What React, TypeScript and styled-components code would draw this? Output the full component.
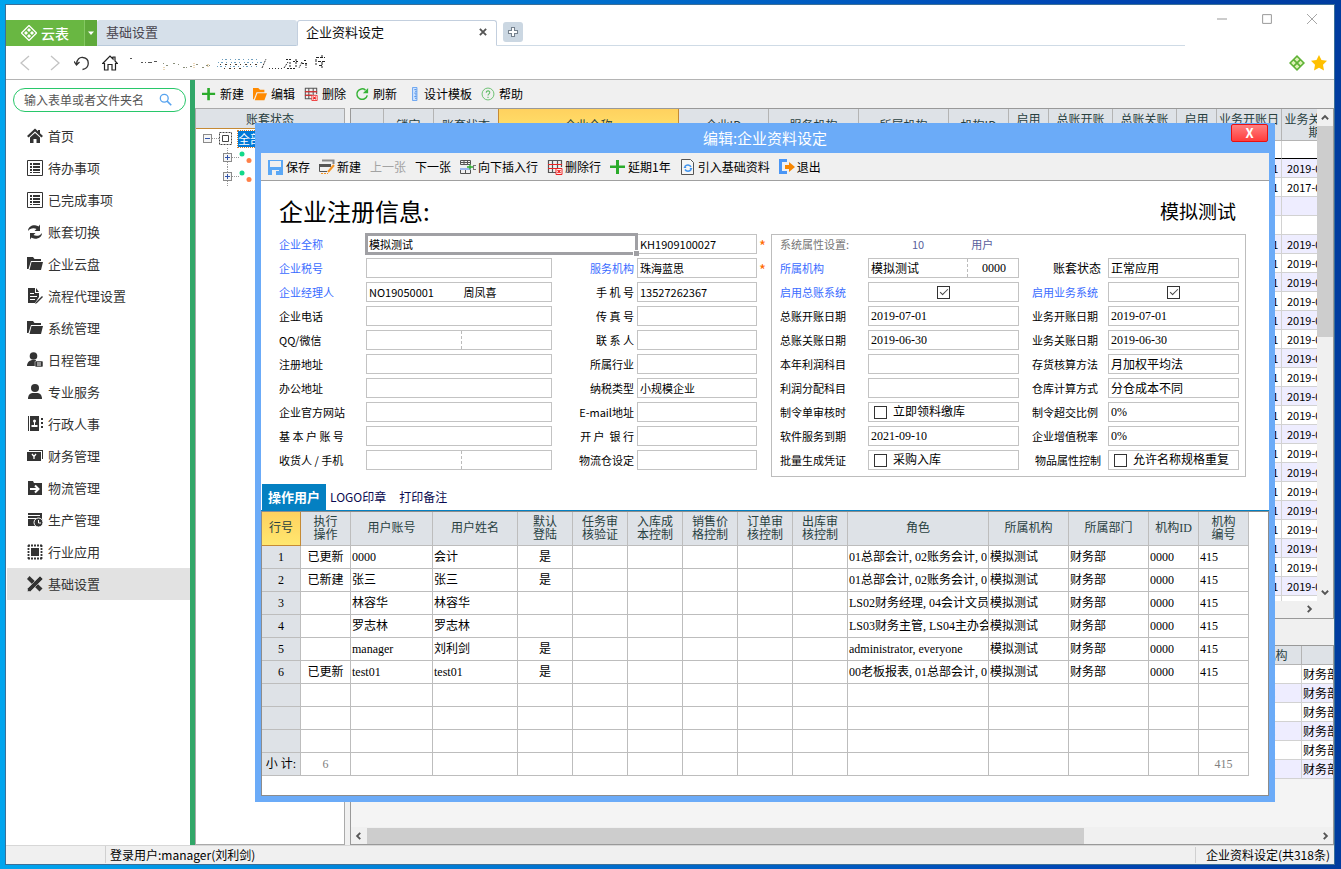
import React from 'react';
import styled, { createGlobalStyle, css } from 'styled-components';

const sans = `"Noto Sans CJK SC", "Liberation Sans", sans-serif`;
const song = `"Liberation Serif", "Noto Sans CJK SC", serif`;

const Global = createGlobalStyle`
  *, *::before, *::after { box-sizing: border-box; }
  body { margin: 0; font-family: ${sans}; font-size: 12px; line-height: 16px; color: #000; }
  button, input { font: inherit; color: inherit; margin: 0; padding: 0; border: 0; background: none; border-radius: 0; }
  svg { display: block; flex: none; }
  table { border-collapse: separate; border-spacing: 0; table-layout: fixed; }
  td, th { padding: 0; font-weight: normal; }
`;

const Desktop = styled.div`
  min-height: 100vh;
  padding: 4px 6px 4px 5px;
  display: flex;
  background: linear-gradient(90deg, #00a5ee 0%, #0073cf 40%, #0046b4 80%, #003c9f 100%);
`;

const Window = styled.div`
  flex: 1;
  min-width: 0;
  display: flex;
  flex-direction: column;
  background: #fff;
  border: 1px solid #3b6f98;
`;

/* ---------- title bar ---------- */
const TitleBar = styled.header`
  display: flex;
  align-items: flex-end;
  height: 41px;
`;
const TabStrip = styled.div`
  flex: 1;
  min-width: 0;
  display: flex;
  align-items: stretch;
  height: 26px;
`;
const Brand = styled.button`
  width: 78px;
  background: #69b742;
  color: #fff;
  font-size: 14px;
  font-weight: 500;
  display: flex;
  align-items: center;
  justify-content: center;
  gap: 4px;
`;
const BrandMenu = styled.button`
  width: 13px;
  background: #5fa93a;
  border-left: 1px solid #84c862;
  display: flex;
  align-items: center;
  justify-content: center;
`;
const Tab = styled.button<{ $active?: boolean }>`
  width: 200px;
  padding: 0 8px 2px 8px;
  display: flex;
  align-items: center;
  justify-content: space-between;
  font-size: 13px;
  color: ${p => (p.$active ? '#111' : '#4a4650')};
  background: ${p => (p.$active ? '#fff' : '#d6e0ea')};
  border: 1px solid ${p => (p.$active ? '#c3cfde' : '#d6e0ea')};
  border-bottom-color: ${p => (p.$active ? '#fff' : '#b9cadb')};
  border-radius: 3px 3px 0 0;
`;
const StripRest = styled.div`
  flex: 1;
  padding: 2px 0 0 6px;
  border-bottom: 1px solid #cfdbe6;
`;
const AddTab = styled.button`
  width: 20px;
  height: 20px;
  border-radius: 3px;
  background: #cbd7e2;
  display: grid;
  place-items: center;
`;
const WindowButtons = styled.div`
  align-self: flex-start;
  display: flex;
  margin-left: 14px;
`;
const WindowButton = styled.button`
  width: 45px;
  height: 28px;
  display: grid;
  place-items: center;
`;

const NavBar = styled.nav`
  height: 34px;
  padding: 0 7px 0 12px;
  display: flex;
  align-items: center;
  border-bottom: 1px solid #b4b4b4;
`;
const NavButton = styled.button`
  width: 28px;
  display: flex;
  align-items: center;
  justify-content: flex-start;
`;
const Address = styled.div`
  flex: 1;
`;
const NavRight = styled.div`
  display: flex;
  gap: 6px;
`;

/* ---------- body ---------- */
const Body = styled.div`
  flex: 1;
  display: flex;
  min-height: 740px;
`;
const Sidebar = styled.aside`
  width: 189px;
  border-right: 5px solid #31a768;
  padding-top: 8px;
`;
const Search = styled.label`
  display: flex;
  align-items: center;
  height: 24px;
  margin: 0 4px 8px 7px;
  padding: 0 12px 0 10px;
  border: 1px solid #28c76a;
  border-radius: 12px;
  input { flex: 1; min-width: 0; outline: 0; }
  input::placeholder { color: #555; opacity: 1; }
`;
const Menu = styled.ul`
  margin: 0;
  padding: 0;
  list-style: none;
`;
const MenuLink = styled.a<{ $active?: boolean }>`
  display: flex;
  align-items: center;
  gap: 5px;
  height: 32px;
  margin-left: 1px;
  padding-left: 20px;
  font-size: 13px;
  color: #333;
  text-decoration: none;
  background: ${p => (p.$active ? '#e2e2e2' : 'transparent')};
`;

const Workspace = styled.main`
  position: relative;
  flex: 1;
  min-width: 0;
  display: flex;
  flex-direction: column;
  background: #f0f0f0;
`;
const Toolbar = styled.div<{ $dialog?: boolean }>`
  flex: none;
  height: 28px;
  padding: 0 7px;
  display: flex;
  align-items: center;
  gap: 9px;
  background: #f0f0f0;
  border-bottom: ${p => (p.$dialog ? '1px solid #a0a0a0' : '0')};
`;
const ToolButton = styled.button<{ $gap: number }>`
  display: flex;
  align-items: center;
  gap: ${p => p.$gap}px;
  white-space: nowrap;
  &:disabled { color: #a3a3a3; }
`;

const Panes = styled.div`
  flex: 1;
  min-height: 0;
  display: grid;
  grid-template-columns: 150px minmax(0, 1fr);
  grid-template-rows: minmax(0, 1fr);
  gap: 5px;
`;
const TreePane = styled.section`
  background: #fff;
  border: 1px solid #aaa;
`;
const TreeHead = styled.div`
  height: 20px;
  line-height: 20px;
  text-align: center;
  color: #28403f;
  background: #dee2e7;
  border-bottom: 1px solid #c58a35;
`;
const TreeRow = styled.div<{ $level: number }>`
  display: flex;
  align-items: center;
  height: 19px;
  padding-left: ${p => 7 + p.$level * 20}px;
`;
const TreeLabel = styled.span`
  margin-left: 6px;
  color: #fff;
  background: #0078d7;
  outline: 1px dotted #d08030;
`;

const Grids = styled.div`
  display: grid;
  min-width: 0;
  grid-template-columns: minmax(0, 1fr);
  grid-template-rows: minmax(0, 51fr) 26px minmax(0, 20fr);
`;
const GridPane = styled.section`
  display: flex;
  flex-direction: column;
  min-height: 0;
  border: 1px solid #999;
  background: #f4f4f4;
`;
const GridRow = styled.div`
  flex: 1;
  min-height: 0;
  display: flex;
  contain: size;
`;
const GridView = styled.div<{ $white?: boolean }>`
  flex: 1;
  min-width: 0;
  overflow: hidden;
  background: ${p => (p.$white ? '#fff' : '#f4f4f4')};
`;
const BackTable = styled.table`
  width: 997px;
  font-size: 11px;
  th {
    height: 32px;
    line-height: 13px;
    font-size: 12px;
    color: #28403f;
    background: #dee2e7;
    border-right: 1px solid #b4b4b4;
    border-bottom: 1px solid #b4b4b4;
  }
  &.short { width: 1071px; font-size: 12px; }
  &.short th { height: 19px; }
  th.selected {
    background: linear-gradient(#ffd15f, #ffe76f);
    border-right-color: #c58a35;
    box-shadow: -1px 0 #c58a35;
  }
  td {
    height: 19px;
    line-height: 16px;
    padding-left: 5px;
    white-space: nowrap;
    border-right: 1px solid #d2d2d2;
    border-bottom: 1px solid #d2d2d2;
  }
  &.short td { padding-left: 1px; background: #fff; }
  tr.odd td, &.short tr.odd td { background: #eeedff; }
  tr.filter td { height: 18px; border-bottom: 1px solid #000; }
`;
const ScrollV = styled.div`
  width: 16px;
  display: flex;
  flex-direction: column;
  justify-content: space-between;
  align-items: center;
  background: #f0f0f0;
`;
const ScrollH = styled.div`
  height: 17px;
  display: flex;
  align-items: center;
  justify-content: space-between;
  background: #f0f0f0;
`;
const Thumb = styled.div<{ $vertical?: boolean }>`
  background: #cdcdcd;
  ${p => (p.$vertical
    ? css`width: 16px; height: 43%; margin-bottom: auto;`
    : css`height: 16px; width: 73%; margin-right: auto;`)}
`;
const Arrow = styled.button`
  width: 16px;
  height: 17px;
  flex: none;
  display: grid;
  place-items: center;
`;

/* ---------- dialog ---------- */
const Dialog = styled.section`
  position: absolute;
  top: 43px;
  left: 60px;
  right: 59px;
  padding: 0 6px 6px;
  background: #6babf8;
`;
const DialogTitle = styled.header`
  position: relative;
  height: 30px;
  line-height: 30px;
  font-size: 15px;
  text-align: center;
  color: #fff;
`;
const CloseButton = styled.button`
  position: absolute;
  right: 1px;
  top: 1px;
  width: 37px;
  height: 18px;
  line-height: 16px;
  font-size: 13px;
  font-weight: bold;
  color: #fff;
  border: 1px solid #e81010;
  border-radius: 2px;
  background: linear-gradient(#ff8080, #ff3c3c);
`;
const DialogBody = styled.div`
  background: #fff;
`;
const Headline = styled.div`
  display: flex;
  align-items: center;
  justify-content: space-between;
  height: 51px;
  padding: 8px 33px 0 18px;
  h1, h2 { margin: 0; font-weight: normal; line-height: 32px; }
  h1 { font-size: 24px; }
  h2 { font-size: 19px; }
`;
const FormArea = styled.form`
  display: grid;
  grid-template-columns: minmax(0, 492fr) minmax(0, 475fr);
  padding: 0 23px 0 18px;
  margin-bottom: 7px;
`;
const FormLeft = styled.div`
  display: grid;
  grid-template-columns: 87px minmax(0, 186fr) 85px minmax(0, 120fr) 14px;
  grid-auto-rows: 24px;
  align-items: center;
  font-size: 11px;
`;
const FormRight = styled.fieldset`
  margin: 2px 0 0;
  padding: 0 6px 4px 8px;
  min-width: 0;
  border: 1px solid #bdbdbd;
  display: grid;
  grid-template-columns: 88px minmax(0, 151fr) 89px minmax(0, 131fr);
  grid-template-rows: 21px repeat(9, 24px);
  align-items: center;
  font-size: 11px;
`;
const Label = styled.label<{ $link?: boolean; $end?: number; $song?: boolean }>`
  white-space: pre;
  color: ${p => (p.$link ? '#3a6cff' : '#000')};
  ${p => p.$end !== undefined && css`justify-self: end; padding-right: ${p.$end}px;`}
  ${p => p.$song && css`font-size: 12px;`}
`;
const Box = styled.div<{ $song?: boolean; $span?: boolean; $center?: boolean }>`
  display: flex;
  align-items: center;
  justify-content: ${p => (p.$center ? 'center' : 'flex-start')};
  height: 20px;
  min-width: 0;
  border: 1px solid #c3c3c3;
  background: #fff;
  ${p => p.$song && css`font-family: ${song}; font-size: 12px;`}
  ${p => p.$span && css`
    position: relative;
    grid-column: span 2;
    outline: 2px solid #a0a0a4;
    outline-offset: -1px;
    border-color: #a0a0a4;
    box-shadow: inset 0 0 0 1px #a0a0a4;
    z-index: 1;
    &::after {
      content: '';
      position: absolute;
      right: -3px;
      bottom: -3px;
      width: 6px;
      height: 6px;
      background: #a0a0a4;
      border: 1px solid #fff;
      border-width: 1px 0 0 1px;
    }
  `}
`;
const Input = styled.input<{ $dash?: boolean; $part?: number }>`
  flex: ${p => p.$part ?? 1} 1 0;
  min-width: 0;
  height: 18px;
  padding-left: 2px;
  outline: 0;
  border-left: ${p => (p.$dash ? '1px dashed #bbb' : '0')};
`;
const CenterInput = styled(Input)`
  text-align: center;
`;
const Check = styled.input`
  appearance: none;
  position: relative;
  flex: none;
  width: 13px;
  height: 13px;
  border: 1px solid #333;
  background: #fff;
  &:checked::after {
    content: '';
    position: absolute;
    left: 2px;
    top: 2px;
    width: 8px;
    height: 4px;
    border: solid #444;
    border-width: 0 0 1px 1px;
    transform: rotate(-45deg);
  }
`;
const CheckLabel = styled.label`
  display: flex;
  align-items: center;
  gap: 6px;
  padding-left: 5px;
  white-space: nowrap;
`;
const Star = styled.span`
  color: #ff6a00;
  font-size: 15px;
  line-height: 16px;
  padding: 4px 0 0 2px;
`;
const Caption = styled.span`
  color: #777;
  padding-bottom: 3px;
`;
const Note = styled.div`
  color: #5a5f9c;
  display: flex;
  gap: 47px;
  padding: 0 0 3px 44px;
`;

const Tabs = styled.div`
  display: flex;
  align-items: stretch;
  height: 26px;
  padding-left: 1px;
`;
const PageTab = styled.button<{ $active?: boolean }>`
  padding: 0 ${p => (p.$active ? 6 : 0)}px;
  margin-right: ${p => (p.$active ? 4 : 13)}px;
  font-size: ${p => (p.$active ? 13 : 12)}px;
  font-weight: ${p => (p.$active ? 'bold' : 'normal')};
  color: ${p => (p.$active ? '#fff' : '#0a0a50')};
  background: ${p => (p.$active ? '#0480c2' : 'none')};
`;
const TableFrame = styled.div`
  border: 1px solid #8c8c8c;
  box-shadow: 0 -1px #0480c2;
  margin-top: 1px;
  padding-bottom: 19px;
  overflow-x: auto;
  overflow-y: hidden;
`;
const UserTable = styled.table`
  width: 987px;
  font-family: ${song};
  th, td {
    overflow: hidden;
    white-space: nowrap;
    border-right: 1px solid #bdbdbd;
    border-bottom: 1px solid #bdbdbd;
  }
  thead th {
    height: 34px;
    line-height: 13px;
    white-space: pre;
    color: #28403f;
    background: #dee2e7;
  }
  thead th:first-child {
    background: linear-gradient(#ffd15f, #ffe76f);
    border-color: #c58a35;
  }
  tbody th, tfoot th { background: #dee2e7; }
  td { height: 23px; padding-left: 1px; }
  td.mid { text-align: center; padding: 0; }
  tfoot td { color: #808080; }
`;

const StatusBar = styled.footer`
  height: 19px;
  display: flex;
  align-items: center;
  background: #f0f0f0;
  border-top: 1px solid #d7d7d7;
  div { flex: 1; margin-left: 99px; }
  span {
    border-left: 1px solid #d0d0d0;
    padding: 0 4px;
  }
  > span { padding-left: 10px; }
`;

/* ---------- icons ---------- */
type IconProps = { name: string; size?: number };

const shapes: Record<string, React.ReactNode> = {
  home: <><path d="M8 .5 0 8l1.6 1.5L8 3.600l6.400 5.900L16 8l-3-2.800V2h-2v1.300z" /><path d="M3 9.500 8 5l5 4.500V15H9.500v-4h-3v4H3z" /></>,
  list: <><path d="M.5.500h15v15H.500z" fill="none" stroke="#333" /><path d="M3 3h2v2H3zm3 0h7v2H6zM3 6h2v2H3zm3 0h7v2H6zM3 9h2v2H3zm3 0h7v2H6zm-3 3h2v1H3zm3 0h7v1H6z" /></>,
  sync: <><path d="M1 7C1 3 5 1 8 1.300c1.500.1 2.500.500 3.500 1.200L13 .5V7H7.500L9.500 5C7 3.500 3 4 1 7z" /><path d="M15 9c0 4-4 6-7 5.700-1.500-.1-2.500-.5-3.500-1.200L3 15.500V9h5.500L6.500 11C9 12.500 13 12 15 9z" /></>,
  folder: <><path d="M0 1h6l1.500 2H14v2H4L1.500 13H0z" /><path d="M4.500 6H16l-2 8H2.500z" /></>,
  doc: <><path d="M1 0h7v5h4v4l-4 6H1zM9 0l3 4H9z" /><path d="M3 5.500h4M3 8.500h7M3 11.500h5" stroke="#fff" /><path d="m9 14 6-6 1 1-6 6-2 1z" /></>,
  agenda: <><circle cx="6.500" cy="4" r="3.800" /><path d="M0 14c0-4 3-6 6-6h3v6z" /><rect x="8" y="9" width="8" height="6" rx="1" stroke="#fff" strokeWidth=".5" /><path d="M10 11h4M10 13h4" stroke="#fff" /></>,
  user: <><circle cx="8" cy="4" r="4" /><path d="M1 15c0-4 2-6 5-6h4c3 0 5 2 5 6z" /></>,
  book: <><path d="M1 0h1v15H1zM3 0h9v15H3zM14 2h2v2h-2zm0 4h2v2h-2zm0 4h2v2h-2z" /><circle cx="7.500" cy="5" r="1.500" fill="#fff" /><path d="M7 6h1v3h2.500v2h-6V9H7z" fill="#fff" /></>,
  money: <><path d="M2 2h14v9h-1V3H2z" /><path d="M0 4h14v9H0z" /><path d="m5 6 2 2.500L9 6M7 8v3" stroke="#fff" strokeWidth="1.300" fill="none" /></>,
  ship: <><path d="M1 1h5l1 2h8v12H1z" /><path d="M3 9h8M8 5.500 11.500 9 8 12.500" stroke="#fff" strokeWidth="2" fill="none" /></>,
  produce: <><path d="M1 1h14v6H8v7H1z" /><path d="M1 3.500h12M1 6.500h8" stroke="#fff" /><circle cx="11.500" cy="10.500" r="4.500" stroke="#fff" /><path d="M11.500 8v3H14" stroke="#fff" fill="none" /></>,
  chip: <><path d="M4 4h8v8H4z" /><path d="M1 1.500h14M1 14.500h14M1.500 1v14M14.500 1v14" stroke="#333" strokeWidth="1.800" strokeDasharray="2 1" fill="none" /></>,
  tools: <><path d="m2.500 0 13 12.500-3 3L0 3z" /><path d="m13 0 3 3L3.500 15.500H.500V12.500z" stroke="#e2e2e2" strokeWidth=".6" /></>,
  plus: <path d="M6 1h3v5.500h6v2.500H9v6H6V9H0V6.500h6z" fill="#2bab2b" />,
  openFolder: <path d="M0 1h6l2 2h5v3H4l-3 8H0zM5 7h11l-3 8H2z" fill="#ff8a00" />,
  gridDelete: <><path d="M1 1.500h14M1 5.500h14M1 9.500h8M1 13.500h8M1.500 1v13M5.500 1v13M10.500 1v8M14.500 1v7" stroke="#555" strokeWidth="1.200" fill="none" /><path d="M1 5.500h14M1 9.500h8" stroke="#e22" strokeWidth="1.200" /><path d="M9 9.500h6v6H9z" fill="#fff" stroke="#e22" /><path d="m10.500 11 3 3m0-3-3 3" stroke="#e22" strokeWidth="1.300" /></>,
  refresh: <><path d="M12 3.500A6 6 0 1 0 14 9.500" stroke="#36b336" strokeWidth="1.700" fill="none" /><path d="M15 1v6H9z" fill="#36b336" /></>,
  ruler: <><path d="M7.500.500h5v15h-5z" fill="#cfe4ff" stroke="#5a9cf0" /><path d="M9.500 3H12M10.500 5H12M9.500 7H12M10.500 9H12M9.500 11H12M10.500 13H12" stroke="#3a80e0" /></>,
  help: <><circle cx="8" cy="8" r="6.800" stroke="#5dbb63" fill="none" /><path d="M6 6.500C6 3.500 10.500 4 10 6.500 9.800 8 8 7.800 8 9.800M8 11v1.500" stroke="#5dbb63" strokeWidth="1.200" fill="none" /></>,
  save: <><path d="M0 1h15v15H0z" fill="#5aa7f5" /><path d="M2 2h11v6H2zM4 11h7v5H4z" fill="#f0f0f0" /><path d="M8 12h3v4H8z" fill="#5aa7f5" /></>,
  edit: <><path d="M3 1.500h11.500V5" stroke="#888" strokeWidth="2" fill="none" /><path d="M0 5h12v3H0z" fill="#555" /><path d="M.500 6v6.500H8" stroke="#555" fill="none" /><path d="m15 6-6 7" stroke="#f79320" strokeWidth="2" /><path d="M2 14.500h7" stroke="#f79320" strokeDasharray="2 1" /></>,
  insert: <><path d="M.500 1.500h10v4H.500zM.500 3.500h10M4 1.500v4M7.500 1.500v4M.500 10.500h10v4H.500z" stroke="#555" fill="none" /><path d="M0 9h11v2H0z" fill="#9bb8ee" /><path d="M5.500 11v4" stroke="#555" /><path d="M13.500 6v5M13 6.500h3M13 10.500h3" stroke="#777" /><path d="M7 8h6M10 5.500v5" stroke="#2bab2b" strokeWidth="1.300" /></>,
  importDoc: <><path d="M1.500.500h9l3 3v12h-12z" fill="#f6f6f6" stroke="#555" /><path d="M5 7.500a3.500 3.500 0 0 1 6 .5M11 10.500a3.500 3.500 0 0 1-6 0" stroke="#3f93ee" strokeWidth="1.500" fill="none" /><path d="M3.500 9 5 6.500 6.500 9zM9.500 9l1.500 2.500L12.500 9z" fill="#3f93ee" /></>,
  exit: <><path d="M8 0H0v15h8v-3H3V3h5z" fill="#4a96f5" /><path d="M6 6h4V3l6 5-6 5v-3H6z" fill="#f78600" /></>,
  lens: <><circle cx="6" cy="6" r="4.500" stroke="#57a3ef" strokeWidth="1.500" fill="none" /><path d="m9 9 5 5" stroke="#57a3ef" strokeWidth="1.800" /></>,
  back: <path d="M11 1 3 8l8 7" stroke="#c3c3c3" strokeWidth="1.300" fill="none" />,
  forward: <path d="m5 1 8 7-8 7" stroke="#c3c3c3" strokeWidth="1.300" fill="none" />,
  undo: <path d="M0 6.500 2.500 10l3-3M2.500 9.500C2.500 4 6 2 9 2.500c3.500.5 5.500 3 5.200 6.500-.2 3-2.500 5-5.700 5.500" stroke="#333" strokeWidth="1.300" fill="none" />,
  house: <path d="M.700 8.500 8 1l3 3V2h2v4l2.300 2.500H13.500V15h-3.500V9.500H6V15H2.500V8.500z" stroke="#222" strokeWidth="1.200" fill="none" />,
  logo: <><path d="M8 .500 15.500 8 8 15.500.500 8z" fill="none" stroke="#fff" strokeWidth="1.300" /><path d="m8 3 2 2-2 2-2-2zM11 6l2 2-2 2-2-2zM8 9l2 2-2 2-2-2zM5 6l2 2-2 2-2-2z" fill="#fff" /></>,
  greenLogo: <><path d="M8 0 16 8 8 16 0 8z" fill="#5fb336" /><path d="m8 2.200 2.300 2.300L8 6.800 5.700 4.500zM11.500 5.700 13.800 8l-2.300 2.300L9.200 8zM8 9.200l2.300 2.300L8 13.800l-2.300-2.300zM4.500 5.700 6.800 8l-2.300 2.300L2.200 8z" fill="#dff1b8" /></>,
  star: <path d="m8 0 2.500 5 5.500.8-4 4 1 5.700-5-2.700-5 2.700 1-5.700-4-4L5.500 5z" fill="#ffc000" />,
  caret: <path d="M2 5h12l-6 7z" fill="#fff" />,
  cross: <path d="m3 3 10 10M13 3 3 13" stroke="#555" strokeWidth="3" />,
  plusOutline: <path d="M6 2h4v4h4v4h-4v4H6v-4H2V6h4z" fill="#fff" stroke="#75818d" strokeWidth="1.400" />,
  minimize: <path d="M0 8h16" stroke="#999" strokeWidth="1.600" />,
  maximize: <path d="M1 1h14v14H1z" stroke="#999" strokeWidth="1.600" fill="none" />,
  close: <path d="m0 0 16 16M16 0 0 16" stroke="#999" strokeWidth="1.400" />,
  up: <path d="m3 10 5-5 5 5" stroke="#555" strokeWidth="3" fill="none" />,
  down: <path d="m3 6 5 5 5-5" stroke="#555" strokeWidth="3" fill="none" />,
  left: <path d="M10 3 5 8l5 5" stroke="#555" strokeWidth="3" fill="none" />,
  right: <path d="m6 3 5 5-5 5" stroke="#555" strokeWidth="3" fill="none" />,
};

const Icon = ({ name, size = 16 }: IconProps) => (
  <svg width={size} height={size} viewBox="0 0 16 16" fill="#333" aria-hidden="true">{shapes[name]}</svg>
);

const Expander = ({ open }: { open?: boolean }) => (
  <svg width="16" height="19" aria-hidden="true">
    {!open && <path d="M4.500 0v19" stroke="#999" strokeDasharray="1 1" />}
    <path d="M9 9.500h7" stroke="#999" strokeDasharray="1 1" />
    <rect x=".5" y="5.500" width="8" height="8" fill="#f6f6f6" stroke="#8a8a8a" />
    <path d={open ? 'M2 9.500h5' : 'M2 9.500h5M4.500 7v5'} stroke="#3355aa" />
  </svg>
);

const SpeckledAddress = () => (
  <svg width="200" height="18" aria-hidden="true" fill="none" strokeWidth="1">
    <path d="M0 4.500h2M11 8.500h2M15 8.500h1M18 8.500h4M24 7.500h3" stroke="#555" />
    <path d="M33 9.500h1M36 11.500h3M43 9.500h2M48 10.500h1M53 13.500h4M60 12.500h2M66 10.500h3M72 13.500h2M76 11.500h4" stroke="#8a8f7a" strokeDasharray="2 1" />
    <path d="M34 13v4M64 9v5M78 10v4" stroke="#d8b070" strokeDasharray="1 1" />
    <path d="M88 8.500h44M87 12.500h42M92 5.500h38" stroke="#6f9fbe" strokeDasharray="1 2 2 3 1 4" />
    <path d="M90 10.500h40M94 14.500h20" stroke="#4b3a2a" strokeDasharray="1 4 2 3" />
    <path d="m132 14 4-9" stroke="#333" strokeDasharray="2 1" />
    <path d="M139 14.500h14" stroke="#333" strokeDasharray="1 2" />
    <path d="M154 14l4-6M156 5.500h5M160 8v5M157 14.500h8M163 7.500h6M166 5v9M172 8l-3 6M172 9.500h5M174 6.500h3M176 10v4" stroke="#222" strokeDasharray="2 1" />
    <path d="M186 3.500h9M192 1v2M186 5v6M188 7.500h8M192 8v6M189 11.500h4" stroke="#222" strokeDasharray="3 1" />
  </svg>
);

/* ---------- data ---------- */
const menu: [string, string][] = [
  ['home', '首页'], ['list', '待办事项'], ['list', '已完成事项'], ['sync', '账套切换'], ['folder', '企业云盘'],
  ['doc', '流程代理设置'], ['folder', '系统管理'], ['agenda', '日程管理'], ['user', '专业服务'], ['book', '行政人事'],
  ['money', '财务管理'], ['ship', '物流管理'], ['produce', '生产管理'], ['chip', '行业应用'], ['tools', '基础设置'],
];
const mainTools: [string, string][] = [
  ['plus', '新建'], ['openFolder', '编辑'], ['gridDelete', '删除'], ['refresh', '刷新'], ['ruler', '设计模板'], ['help', '帮助'],
];
const dialogTools: [string, string][] = [
  ['save', '保存'], ['edit', '新建'], ['', '上一张'], ['', '下一张'], ['insert', '向下插入行'], ['gridDelete', '删除行'],
  ['plus', '延期1年'], ['importDoc', '引入基础资料'], ['exit', '退出'],
];
const backColumns: [string, number][] = [
  ['', 33], ['锁定', 50], ['账套状态', 65], ['企业全称', 180], ['企业ID', 90], ['服务机构', 90], ['所属机构', 90], ['机构ID', 60],
  ['启用\n总账', 40], ['总账开账\n日期', 64], ['总账关账\n日期', 64], ['启用\n业务', 40], ['业务开账日\n期', 65], ['业务关账日\n期', 66],
];
const backDates = Array.from({ length: 24 }, (_, i) => {
  if (i === 2 || i === 3 || i === 23) return ['', ''];
  return [i === 1 ? '2017-07-01' : '2019-07-01', i === 1 ? '2017-06-30' : '2019-06-30'];
});

type Field = { label: string; link?: boolean; values?: string[]; star?: boolean; plain?: boolean };
const leftRows: [Field, Field][] = [
  [{ label: '企业税号', link: true }, { label: '服务机构', link: true, values: ['珠海蓝思'], star: true }],
  [{ label: '企业经理人', link: true, values: ['NO19050001', '周凤喜'], plain: true }, { label: '手 机 号', values: ['13527262367'] }],
  [{ label: '企业电话' }, { label: '传 真 号' }],
  [{ label: 'QQ/微信', values: ['', ''] }, { label: '联 系 人' }],
  [{ label: '注册地址' }, { label: '所属行业' }],
  [{ label: '办公地址' }, { label: '纳税类型', values: ['小规模企业'] }],
  [{ label: '企业官方网站' }, { label: 'E-mail地址' }],
  [{ label: '基 本 户 账 号' }, { label: '开 户  银 行' }],
  [{ label: '收货人 / 手机', values: ['', ''] }, { label: '物流仓设定' }],
];

type Setting = { label: string; link?: boolean; text?: string; check?: boolean; caption?: string; wide?: boolean };
const rightRows: [Setting, Setting][] = [
  [{ label: '启用总账系统', link: true, check: true }, { label: '启用业务系统', link: true, check: true }],
  [{ label: '总账开账日期', text: '2019-07-01' }, { label: '业务开账日期', text: '2019-07-01' }],
  [{ label: '总账关账日期', text: '2019-06-30' }, { label: '业务关账日期', text: '2019-06-30' }],
  [{ label: '本年利润科目' }, { label: '存货核算方法', text: '月加权平均法' }],
  [{ label: '利润分配科目' }, { label: '仓库计算方式', text: '分仓成本不同' }],
  [{ label: '制令单审核时', caption: '立即领料缴库' }, { label: '制令超交比例', text: '0%' }],
  [{ label: '软件服务到期', text: '2021-09-10' }, { label: '企业增值税率', text: '0%' }],
  [{ label: '批量生成凭证', caption: '采购入库' }, { label: '物品属性控制', caption: '允许名称规格重复', wide: true }],
];

const userColumns: [string, number][] = [
  ['行号', 39], ['执行\n操作', 50], ['用户账号', 82], ['用户姓名', 85], ['默认\n登陆', 55], ['任务审\n核验证', 55], ['入库成\n本控制', 55],
  ['销售价\n格控制', 55], ['订单审\n核控制', 55], ['出库审\n核控制', 55], ['角色', 141], ['所属机构', 80], ['所属部门', 80], ['机构ID', 50], ['机构\n编号', 50],
];
const users = [
  ['已更新', '0000', '会计', '是', '01总部会计, 02账务会计, 0'],
  ['已新建', '张三', '张三', '是', '01总部会计, 02账务会计, 0'],
  ['', '林容华', '林容华', '', 'LS02财务经理, 04会计文员'],
  ['', '罗志林', '罗志林', '', 'LS03财务主管, LS04主办会'],
  ['', 'manager', '刘利剑', '是', 'administrator, everyone'],
  ['已更新', 'test01', 'test01', '是', '00老板报表, 01总部会计, 0'],
];
const userRows = Array.from({ length: 9 }, (_, i) => {
  const u = users[i];
  return u
    ? [u[0], u[1], u[2], u[3], '', '', '', '', '', u[4], '模拟测试', '财务部', '0000', '415']
    : Array<string>(14).fill('');
});

const Columns = ({ columns }: { columns: [string, number][] }) => (
  <colgroup>{columns.map(([name, w], i) => <col key={name + i} style={{ width: w }} />)}</colgroup>
);
const Lines = ({ text }: { text: string }) => (
  <>{text.split('\n').map((line, i) => <React.Fragment key={i}>{i > 0 && <br />}{line}</React.Fragment>)}</>
);

const FieldPair = ({ field, id, end }: { field: Field; id: string; end?: number }) => (
  <>
    <Label htmlFor={id} $link={field.link} $end={end}>{field.label}</Label>
    <Box>
      {(field.values ?? ['']).map((value, i) => (
        <Input key={i} id={i ? undefined : id} aria-label={i ? field.label : undefined} $dash={i > 0 && !field.plain}
          $part={i ? 90 : 95} defaultValue={value} />
      ))}
    </Box>
  </>
);

const SettingPair = ({ item, id, end }: { item: Setting; id: string; end?: number }) => (
  <>
    <Label htmlFor={id} $link={item.link} $end={item.wide ? 7 : end}>{item.label}</Label>
    <Box $song $center={item.check}>
      {item.check && <Check type="checkbox" id={id} defaultChecked />}
      {item.caption && <CheckLabel><Check type="checkbox" id={id} />{item.caption}</CheckLabel>}
      {!item.check && !item.caption && <Input id={id} defaultValue={item.text ?? ''} />}
    </Box>
  </>
);

const EditDialog = () => (
  <Dialog role="dialog" aria-label="编辑:企业资料设定">
    <DialogTitle>编辑:企业资料设定<CloseButton type="button">X</CloseButton></DialogTitle>
    <DialogBody>
      <Toolbar $dialog>
        {dialogTools.map(([icon, text]) => (
          <ToolButton key={text} type="button" $gap={2} disabled={text === '上一张'}>
            {icon && <Icon name={icon} />}{text}
          </ToolButton>
        ))}
      </Toolbar>
      <Headline><h1>企业注册信息:</h1><h2>模拟测试</h2></Headline>
      <FormArea>
        <FormLeft>
          <Label htmlFor="company" $link>企业全称</Label>
          <Box $span><Input id="company" defaultValue="模拟测试" /></Box>
          <Box><Input aria-label="企业编号" defaultValue="KH1909100027" /></Box>
          <Star>*</Star>
          {leftRows.map(([a, b], i) => (
            <React.Fragment key={a.label}>
              <FieldPair field={a} id={`a${i}`} />
              <FieldPair field={b} id={`b${i}`} end={3} />
              <Star>{b.star ? '*' : ''}</Star>
            </React.Fragment>
          ))}
        </FormLeft>
        <FormRight>
          <Caption>系统属性设置:</Caption>
          <Note><span>10</span><span>用户</span></Note>
          <span /><span />
          <Label htmlFor="org" $link>所属机构</Label>
          <Box $song>
            <Input id="org" $part={2} defaultValue="模拟测试" />
            <CenterInput aria-label="机构编号" $dash defaultValue="0000" />
          </Box>
          <Label htmlFor="state" $end={7} $song>账套状态</Label>
          <Box $song><Input id="state" defaultValue="正常应用" /></Box>
          {rightRows.map(([a, b], i) => (
            <React.Fragment key={a.label}>
              <SettingPair item={a} id={`c${i}`} />
              <SettingPair item={b} id={`d${i}`} end={10} />
            </React.Fragment>
          ))}
        </FormRight>
      </FormArea>
      <Tabs>
        <PageTab type="button" $active>操作用户</PageTab>
        <PageTab type="button">LOGO印章</PageTab>
        <PageTab type="button">打印备注</PageTab>
      </Tabs>
      <TableFrame>
        <UserTable>
          <Columns columns={userColumns} />
          <thead>
            <tr>{userColumns.map(([name]) => <th key={name} scope="col"><Lines text={name} /></th>)}</tr>
          </thead>
          <tbody>
            {userRows.map((row, r) => (
              <tr key={r}>
                <th scope="row">{r < users.length ? r + 1 : ''}</th>
                {row.map((cell, c) => <td key={c} className={c === 0 || c === 3 ? 'mid' : undefined}>{cell}</td>)}
              </tr>
            ))}
          </tbody>
          <tfoot>
            <tr>
              <th scope="row">小 计:</th>
              {userColumns.slice(1).map(([name], i) => (
                <td key={name} className="mid">{i === 0 ? '6' : i === 13 ? '415' : ''}</td>
              ))}
            </tr>
          </tfoot>
        </UserTable>
      </TableFrame>
    </DialogBody>
  </Dialog>
);

const lowerColumns: [string, number][] = [['', 875], ['所属机构', 76], ['所属部门', 120]];

export default function App() {
  return (
    <Desktop>
      <Global />
      <Window>
        <TitleBar>
          <TabStrip>
            <Brand type="button"><Icon name="logo" />云表</Brand>
            <BrandMenu type="button" aria-label="菜单"><Icon name="caret" size={8} /></BrandMenu>
            <Tab type="button">基础设置</Tab>
            <Tab type="button" $active>企业资料设定<Icon name="cross" size={10} /></Tab>
            <StripRest><AddTab type="button" aria-label="新标签"><Icon name="plusOutline" size={12} /></AddTab></StripRest>
          </TabStrip>
          <WindowButtons>
            <WindowButton type="button" aria-label="最小化"><Icon name="minimize" size={10} /></WindowButton>
            <WindowButton type="button" aria-label="最大化"><Icon name="maximize" size={10} /></WindowButton>
            <WindowButton type="button" aria-label="关闭"><Icon name="close" size={10} /></WindowButton>
          </WindowButtons>
        </TitleBar>
        <NavBar>
          <NavButton type="button" aria-label="后退"><Icon name="back" /></NavButton>
          <NavButton type="button" aria-label="前进"><Icon name="forward" /></NavButton>
          <NavButton type="button" aria-label="撤销"><Icon name="undo" /></NavButton>
          <NavButton type="button" aria-label="主页"><Icon name="house" /></NavButton>
          <Address><SpeckledAddress /></Address>
          <NavRight><Icon name="greenLogo" /><Icon name="star" /></NavRight>
        </NavBar>
        <Body>
          <Sidebar>
            <Search><input placeholder="输入表单或者文件夹名" aria-label="搜索" /><Icon name="lens" size={14} /></Search>
            <Menu>
              {menu.map(([icon, text]) => (
                <li key={text}><MenuLink href="#" $active={text === '基础设置'}><Icon name={icon} />{text}</MenuLink></li>
              ))}
            </Menu>
          </Sidebar>
          <Workspace>
            <Toolbar>
              {mainTools.map(([icon, text]) => (
                <ToolButton key={text} type="button" $gap={4}><Icon name={icon} size={14} />{text}</ToolButton>
              ))}
            </Toolbar>
            <Panes>
              <TreePane>
                <TreeHead>账套状态</TreeHead>
                <TreeRow $level={0}>
                  <Expander open />
                  <svg width="13" height="13"><path d="M.500.500h12v12H.500z" fill="none" stroke="#444" strokeDasharray="2 1" /><path d="M3.500 3.500h6v6h-6z" fill="none" stroke="#444" /></svg>
                  <TreeLabel>全部</TreeLabel>
                </TreeRow>
                {[0, 1].map(i => (
                  <TreeRow key={i} $level={1}>
                    <Expander />
                    <svg width="13" height="13"><circle cx="3" cy="3" r="2.500" fill="#12d98a" /><circle cx="10" cy="9.500" r="2.500" fill="#ff8048" /></svg>
                  </TreeRow>
                ))}
              </TreePane>
              <Grids>
                <GridPane>
                  <GridRow>
                    <GridView $white>
                      <BackTable>
                        <Columns columns={backColumns} />
                        <thead>
                          <tr>{backColumns.map(([name], i) => (
                            <th key={i} scope="col" className={name === '企业全称' ? 'selected' : undefined}><Lines text={name} /></th>
                          ))}</tr>
                        </thead>
                        <tbody>
                          <tr className="filter">{backColumns.map((_, i) => <td key={i} />)}</tr>
                          {backDates.map(([open, close], r) => (
                            <tr key={r} className={r % 2 ? undefined : 'odd'}>
                              {backColumns.map((_, i) => <td key={i}>{i === 12 ? open : i === 13 ? close : ''}</td>)}
                            </tr>
                          ))}
                        </tbody>
                      </BackTable>
                    </GridView>
                    <ScrollV>
                      <Arrow type="button" aria-label="上"><Icon name="up" size={10} /></Arrow>
                      <Thumb $vertical />
                      <Arrow type="button" aria-label="下"><Icon name="down" size={10} /></Arrow>
                    </ScrollV>
                  </GridRow>
                  <ScrollH>
                    <Arrow type="button" aria-label="左"><Icon name="left" size={10} /></Arrow>
                    <Thumb />
                    <Arrow type="button" aria-label="右"><Icon name="right" size={10} /></Arrow>
                    <Arrow as="span" />
                  </ScrollH>
                </GridPane>
                <div />
                <GridPane>
                  <GridRow>
                    <GridView>
                      <BackTable className="short">
                        <Columns columns={lowerColumns} />
                        <thead>
                          <tr>{lowerColumns.map(([name], i) => <th key={i} scope="col"><Lines text={name} /></th>)}</tr>
                        </thead>
                        <tbody>
                          {[0, 1, 2, 3, 4, 5].map(r => (
                            <tr key={r} className={r % 2 ? 'odd' : 'even'}><td /><td>模拟测试</td><td>财务部</td></tr>
                          ))}
                        </tbody>
                      </BackTable>
                    </GridView>
                  </GridRow>
                  <ScrollH>
                    <Arrow type="button" aria-label="左"><Icon name="left" size={10} /></Arrow>
                    <Thumb />
                    <Arrow type="button" aria-label="右"><Icon name="right" size={10} /></Arrow>
                  </ScrollH>
                </GridPane>
              </Grids>
            </Panes>
            <EditDialog />
          </Workspace>
        </Body>
        <StatusBar>
          <div><span>登录用户:manager(刘利剑)</span></div>
          <span>企业资料设定(共318条)</span>
        </StatusBar>
      </Window>
    </Desktop>
  );
}
